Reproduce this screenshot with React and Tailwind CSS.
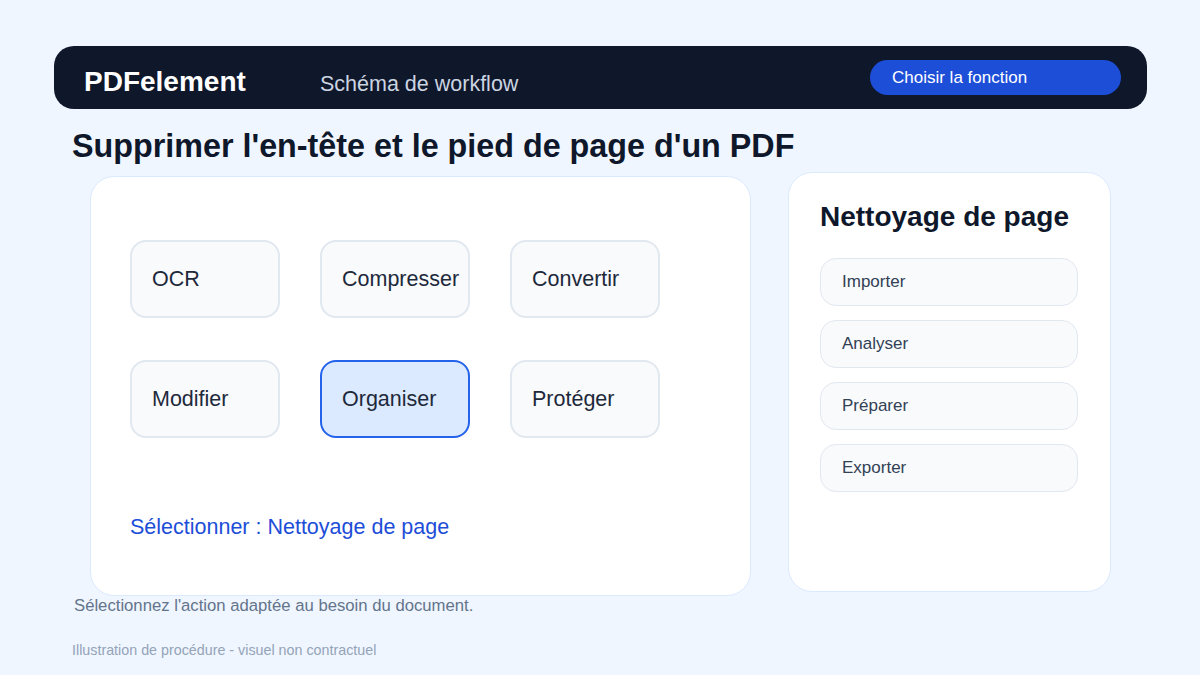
const tools = ["OCR", "Compresser", "Convertir", "Modifier", "Organiser", "Protéger"];
const steps = ["Importer", "Analyser", "Préparer", "Exporter"];

const App = () => {
  const selected = "Organiser";

  return (
    <main className="w-[1200px] h-[675px] bg-[#eff6ff] font-['Liberation_Sans',Arial,sans-serif] pt-[46px] pl-[54px] pr-[53px] overflow-hidden">
      {/* Top bar */}
      <header className="h-[63px] bg-[#0f172a] rounded-[20px] flex items-center pl-[30px] pr-[26px]">
        <span className="mt-[8px] text-white font-bold text-[28px] w-[236px]">PDFelement</span>
        <span className="mt-[13px] text-[#cbd5e1] text-[21.5px]">Schéma de workflow</span>
        <button className="ml-auto w-[251px] h-[35px] rounded-full bg-[#1d4ed8] text-white text-[17px] text-left pl-[22px]">
          Choisir la fonction
        </button>
      </header>

      <h1 className="mt-[19px] ml-[18px] text-[32.3px] leading-[36px] font-bold text-[#0f172a]">
        Supprimer l'en-tête et le pied de page d'un PDF
      </h1>

      <div className="flex items-start mt-[8px] ml-[36px]">
        {/* Tool grid card */}
        <section className="w-[661px] h-[420px] mt-[4px] bg-white border border-[#dbeafe] rounded-[24px] pl-[39px] pt-[63px]">
          <div className="grid grid-cols-[150px_150px_150px] gap-x-[40px] gap-y-[42px]">
            {tools.map((t) => (
              <div
                key={t}
                className={`h-[78px] rounded-[16px] border-2 flex items-center pl-[20px] text-[21.5px] text-[#1e293b] ${
                  t === selected
                    ? "bg-[#dbeafe] border-[#2563eb]"
                    : "bg-[#f8fafc] border-[#e2e8f0]"
                }`}
              >
                {t}
              </div>
            ))}
          </div>
          <p className="mt-[77px] text-[21.5px] leading-[24px] text-[#1d4ed8]">
            Sélectionner : Nettoyage de page
          </p>
        </section>

        {/* Steps card */}
        <aside className="ml-[37px] w-[323px] h-[420px] bg-white border border-[#dbeafe] rounded-[24px] pl-[31px] pr-[32px] pt-[28px]">
          <h2 className="text-[28px] leading-[32px] font-bold text-[#0f172a]">Nettoyage de page</h2>
          <div className="mt-[25px] flex flex-col gap-[14px]">
            {steps.map((s) => (
              <div
                key={s}
                className="h-[48px] rounded-[16px] border border-[#e2e8f0] bg-[#f8fafc] flex items-center pl-[21px] text-[17px] text-[#334155]"
              >
                {s}
              </div>
            ))}
          </div>
        </aside>
      </div>

      <p className="mt-0 ml-[20px] text-[16.7px] leading-[20px] text-[#64748b]">
        Sélectionnez l'action adaptée au besoin du document.
      </p>
      <p className="mt-[26px] ml-[18px] text-[14.3px] leading-[16px] text-[#94a3b8]">
        Illustration de procédure - visuel non contractuel
      </p>
    </main>
  );
};

export default App;
